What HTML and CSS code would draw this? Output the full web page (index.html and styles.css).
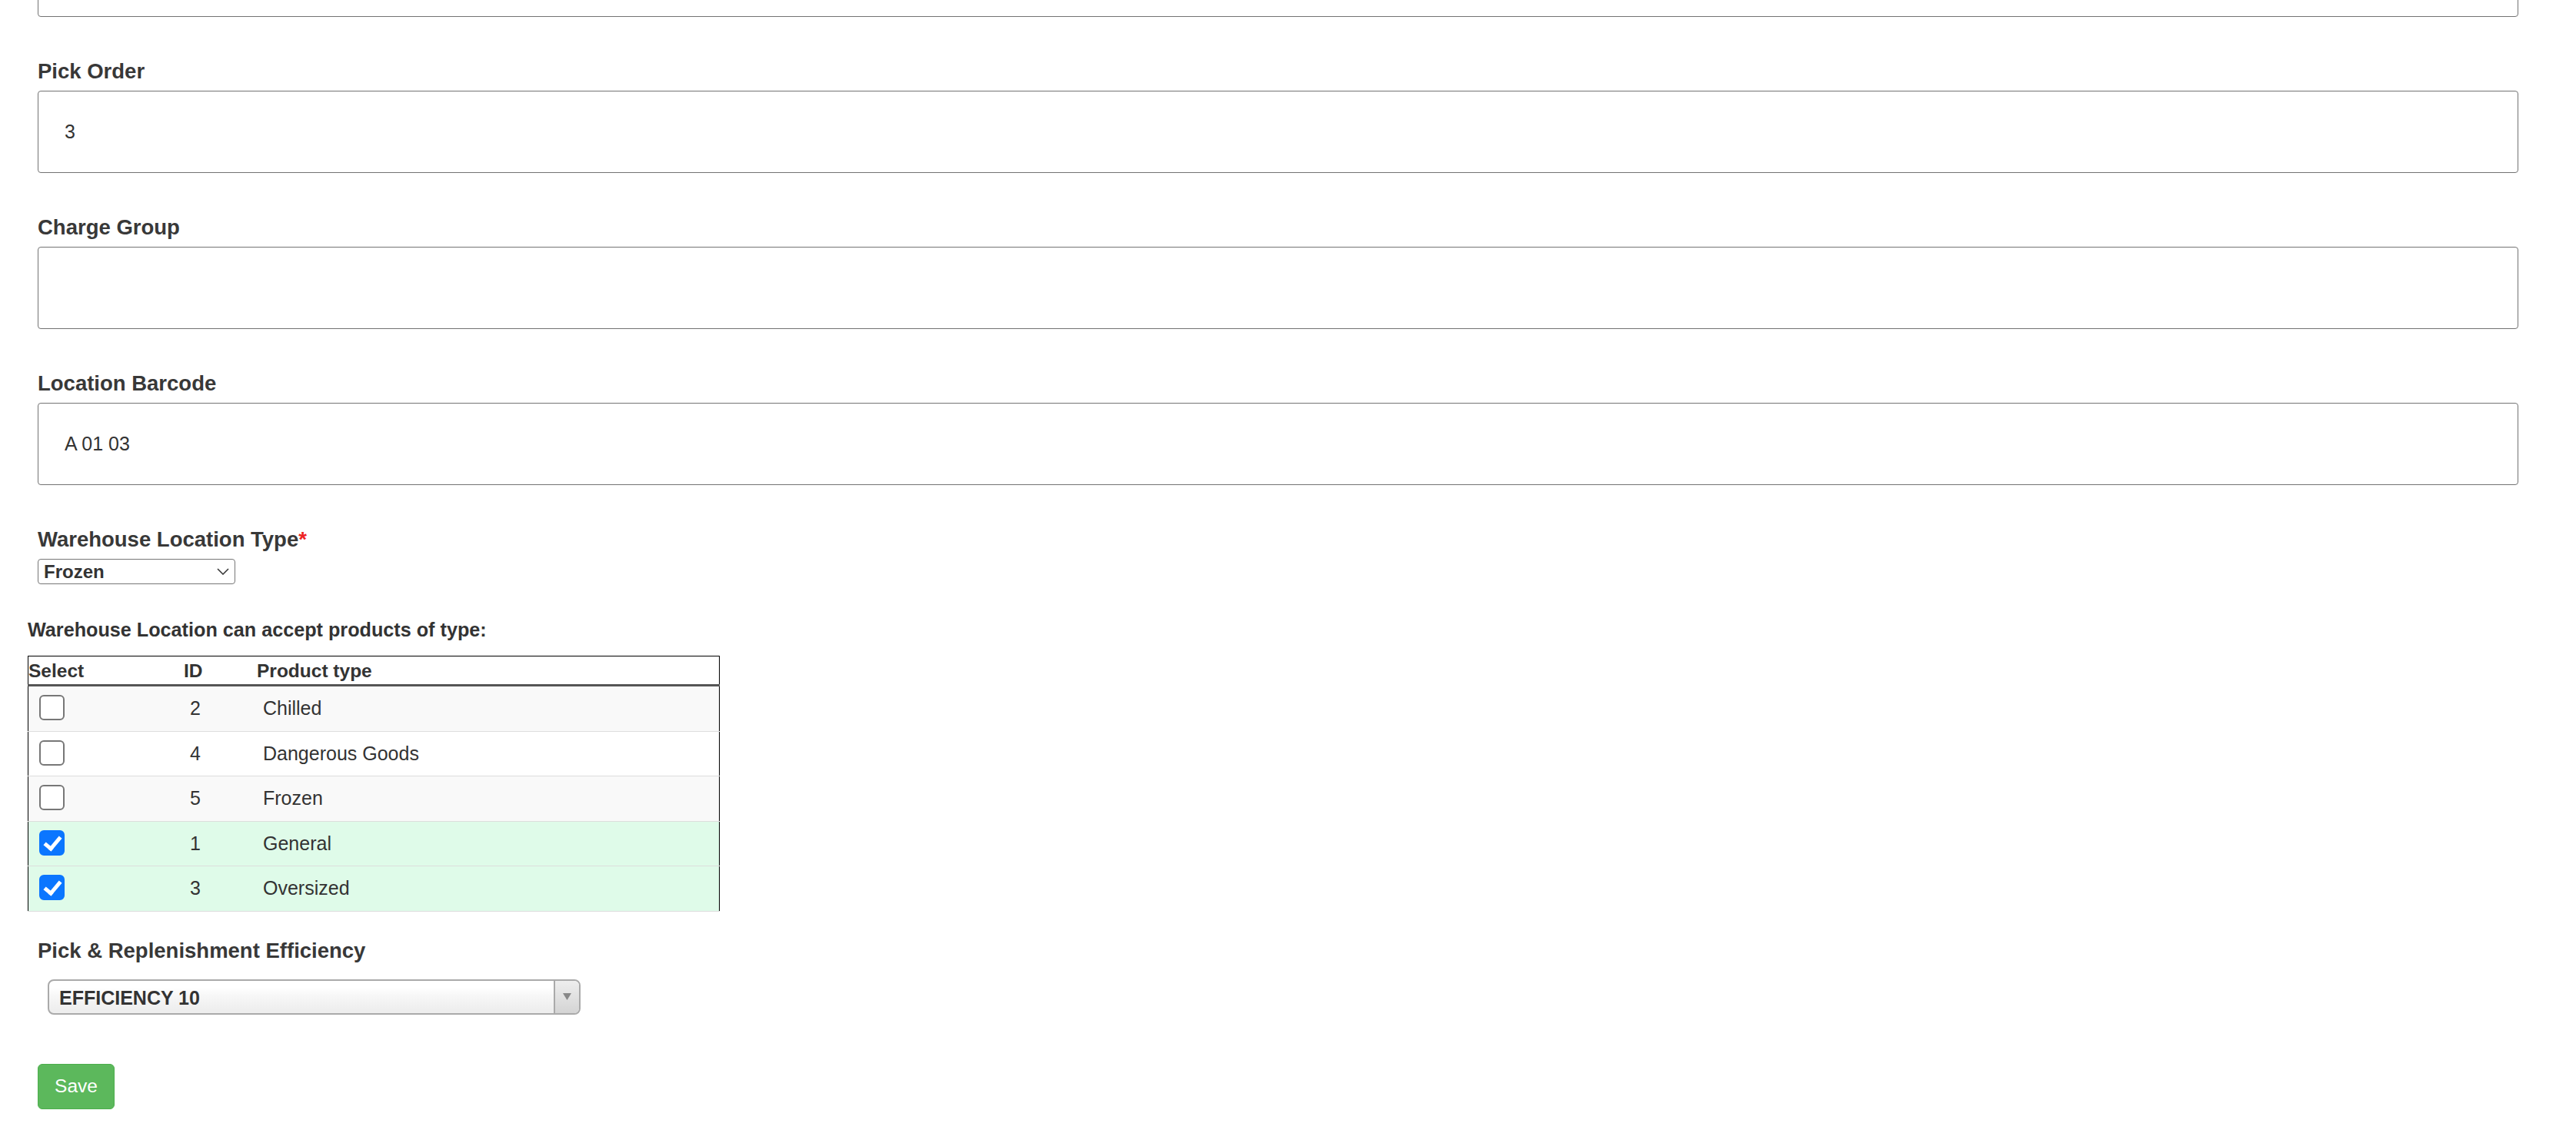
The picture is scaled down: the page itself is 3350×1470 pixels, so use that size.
FILE: index.html
```html
<!DOCTYPE html>
<html lang="en">
<head>
  <meta charset="UTF-8">
  <title>Edit Warehouse Location</title>
  <link rel="stylesheet" href="styles.css">
</head>
<body>

  <form class="page">

    <div class="form-group scrolled">
      <input type="text" class="form-control" value="">
    </div>

    <div class="form-group">
      <label for="pick-order">Pick Order</label>
      <input type="text" id="pick-order" class="form-control" value="3">
    </div>

    <div class="form-group">
      <label for="charge-group">Charge Group</label>
      <input type="text" id="charge-group" class="form-control" value="">
    </div>

    <div class="form-group">
      <label for="barcode">Location Barcode</label>
      <input type="text" id="barcode" class="form-control" value="A 01 03">
    </div>

    <div class="form-group tight">
      <label for="loc-type">Warehouse Location Type<span class="required">*</span></label>
      <div class="select-wrap">
        <select id="loc-type" class="plain-select">
          <option>Chilled</option>
          <option>Dangerous Goods</option>
          <option selected>Frozen</option>
          <option>General</option>
          <option>Oversized</option>
        </select>
        <svg class="chevron" width="16" height="9" viewBox="0 0 16 9">
          <path d="M1 1 L8 8 L15 1" fill="none" stroke="#333" stroke-width="1.5"/>
        </svg>
      </div>
    </div>

    <div class="product-types">
      <p class="types-title">Warehouse Location can accept products of type:</p>
      <table class="types-table">
        <thead>
          <tr>
            <th class="col-select">Select</th>
            <th class="col-id">ID</th>
            <th>Product type</th>
          </tr>
        </thead>
        <tbody>
          <tr>
            <td><input type="checkbox" class="tick"></td>
            <td>2</td>
            <td>Chilled</td>
          </tr>
          <tr>
            <td><input type="checkbox" class="tick"></td>
            <td>4</td>
            <td>Dangerous Goods</td>
          </tr>
          <tr>
            <td><input type="checkbox" class="tick"></td>
            <td>5</td>
            <td>Frozen</td>
          </tr>
          <tr class="selected">
            <td><input type="checkbox" class="tick" checked></td>
            <td>1</td>
            <td>General</td>
          </tr>
          <tr class="selected">
            <td><input type="checkbox" class="tick" checked></td>
            <td>3</td>
            <td>Oversized</td>
          </tr>
        </tbody>
      </table>
    </div>

    <div class="form-group wide-gap">
      <label>Pick &amp; Replenishment Efficiency</label>
      <div class="chosen-single">
        <span class="chosen-text">EFFICIENCY 10</span>
        <span class="chosen-arrow">
          <svg width="11" height="9" viewBox="0 0 11 9">
            <polygon points="0,0 11,0 5.5,9" fill="#888"/>
          </svg>
        </span>
      </div>
    </div>

    <button type="button" class="btn-save">Save</button>

  </form>

</body>
</html>
```

FILE: styles.css
```css
body {
  margin: 0;
  font-family: "Liberation Sans", Arial, Helvetica, sans-serif;
  color: #333;
  background: #fff;
}
.page {
  padding: 0 75px 0 49px;
}
.form-group {
  margin-bottom: 51px;
}
.form-group.scrolled {
  margin-top: -85px;
}
.form-group.tight {
  margin-bottom: 42px;
}
.form-group.wide-gap {
  margin-bottom: 64px;
}
label {
  display: block;
  font-size: 27.5px;
  font-weight: bold;
  line-height: 40px;
  margin-bottom: 5px;
  color: #383838;
}
.required {
  color: #ee2222;
}
.form-control {
  display: block;
  box-sizing: border-box;
  width: 100%;
  height: 107px;
  padding: 0 34px;
  border: 1px solid #737373;
  border-radius: 4px;
  font-family: inherit;
  font-size: 25px;
  color: #333;
  background: #fff;
}
.select-wrap {
  position: relative;
  display: inline-block;
}
.plain-select {
  appearance: none;
  -webkit-appearance: none;
  box-sizing: border-box;
  width: 257px;
  height: 33px;
  padding: 0 30px 0 7px;
  border: 1px solid #767676;
  border-radius: 4px;
  background: #fff;
  font-family: inherit;
  font-size: 24px;
  font-weight: bold;
  color: #333;
}
.chevron {
  position: absolute;
  right: 8px;
  top: 12px;
  pointer-events: none;
}

/* product types */
.product-types {
  margin: 0 0 31px -13px;
}
.types-title {
  margin: 0 0 17px;
  font-size: 25.2px;
  font-weight: bold;
  line-height: 34px;
}
.types-table {
  width: 900px;
  table-layout: fixed;
  border-collapse: collapse;
  border: 1px solid #000;
  border-bottom: none;
  font-size: 25px;
}
.types-table th {
  padding: 2px 0 0;
  font-size: 24.5px;
  line-height: 34px;
  text-align: left;
  font-weight: bold;
  border-bottom: 3px solid #555;
}
.col-select {
  width: 202px;
}
.col-id {
  width: 95px;
}
.types-table td {
  padding: 0 0 0 8px;
  line-height: 57.5px;
  border-bottom: 1px solid #ddd;
}
.types-table tbody tr:nth-child(odd) {
  background: #f9f9f9;
}
.types-table tbody tr.selected {
  background: #dffbe9;
}
.tick {
  appearance: none;
  -webkit-appearance: none;
  position: relative;
  box-sizing: border-box;
  width: 33px;
  height: 33px;
  margin: 0 0 5px 6px;
  vertical-align: middle;
  border: 2px solid #777;
  border-radius: 6px;
  background: #fff;
}
.tick:checked {
  border-color: #0b76ff;
  background: #0b76ff;
}
.tick:checked::after {
  content: "";
  position: absolute;
  left: 9px;
  top: 2px;
  width: 8px;
  height: 17px;
  border-right: 5px solid #fff;
  border-bottom: 5px solid #fff;
  transform: rotate(40deg);
}

/* efficiency select */
.chosen-single {
  display: flex;
  box-sizing: border-box;
  width: 693px;
  height: 46px;
  margin: 17px 0 0 13px;
  border: 2px solid #aaa;
  border-radius: 8px;
  background: linear-gradient(#fff 20%, #f6f6f6 50%, #eee 90%);
  overflow: hidden;
}
.chosen-text {
  flex: 1;
  padding: 2px 0 0 13px;
  font-size: 25px;
  font-weight: bold;
  line-height: 40px;
  color: #333;
}
.chosen-arrow {
  display: flex;
  align-items: center;
  justify-content: center;
  width: 31px;
  border-left: 2px solid #aaa;
  background: linear-gradient(#eee, #d4d4d4);
}
.btn-save {
  box-sizing: border-box;
  width: 100px;
  height: 59px;
  padding: 0;
  border: 1px solid #4cae4c;
  border-radius: 6px;
  background: #5cb85c;
  color: #fff;
  font-family: inherit;
  font-size: 24.5px;
}
```
